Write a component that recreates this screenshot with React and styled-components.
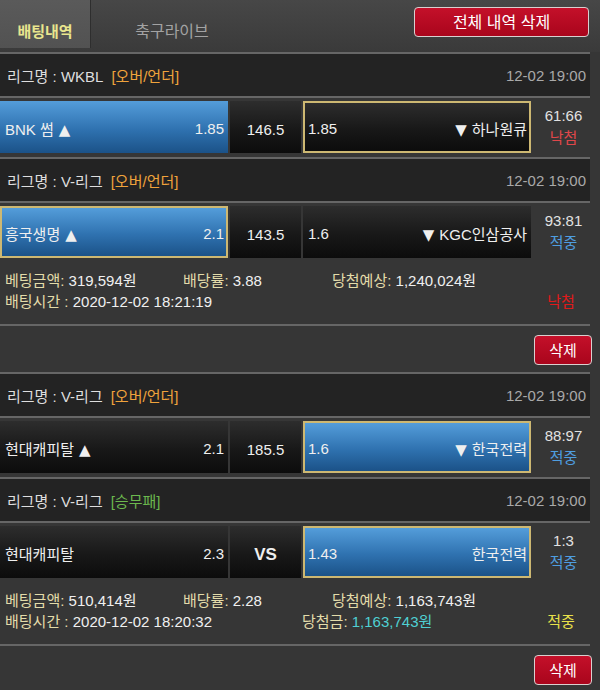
import React from "react";
import styled, { createGlobalStyle, css } from "styled-components";

const GlobalStyle = createGlobalStyle`
  html, body {
    margin: 0;
    background: #363636;
  }
  body {
    font-family: "Liberation Sans", "Noto Sans CJK KR", sans-serif;
    color: #e6e6e6;
  }
`;

const Page = styled.div`
  width: 600px;
  height: 690px;
  overflow: hidden;
  background: #363636;
`;

const TopBar = styled.div`
  height: 52px;
  display: flex;
  align-items: flex-start;
  background: linear-gradient(#474747, #3a3a3a);
  padding-right: 11px;
`;

const Tab = styled.div`
  height: 48px;
  display: flex;
  align-items: center;
  justify-content: center;
  padding-top: 12px;
  box-sizing: border-box;
  font-size: 15px;
  ${(p) =>
    p.active
      ? css`
          width: 91px;
          background: linear-gradient(#5a5a5a, #525252);
          border-right: 1px solid #2e2e2e;
          color: #e9e68e;
          font-weight: bold;
        `
      : css`
          width: 162px;
          font-size: 16px;
          color: #a3a3a3;
        `}
`;

const DeleteAll = styled.button`
  margin-left: auto;
  margin-top: 7px;
  width: 175px;
  height: 30px;
  border: 1px solid #d9cfcf;
  border-radius: 4px;
  background: linear-gradient(#c4102a, #a9051c);
  color: #fff;
  font-family: inherit;
  font-size: 16px;
  padding: 0 0 3px;
`;

const Content = styled.div`
  width: 590px;
`;

const Line = styled.div`
  height: 2px;
  background: #666;
`;

const LeagueHeader = styled.div`
  height: 42px;
  display: flex;
  align-items: center;
  padding: 0 4px 0 7px;
  background: #232323;
  font-size: 15px;
  color: #dedede;
`;

const Tag = styled.span`
  margin-left: 8px;
  color: ${(p) => (p.kind === "승무패" ? "#6cb94e" : "#f0a33c")};
`;

const Time = styled.span`
  margin-left: auto;
  color: #a9a9a9;
`;

const BetRow = styled.div`
  display: flex;
  gap: 2px;
  padding: 3px 0 4px;
  font-size: 15px;
`;

const Cell = styled.div`
  height: 52px;
  box-sizing: border-box;
  display: flex;
  align-items: center;
  justify-content: space-between;
  padding: 2px 4px 0 5px;
  color: #efefef;
  background: ${(p) =>
    p.picked
      ? "linear-gradient(#549dda, #2f72b0 55%, #1b5288)"
      : "linear-gradient(#2d2d2d, #181818 55%, #0c0c0c)"};
  border: ${(p) => (p.outlined ? "2px solid #cdb872" : "none")};
  ${(p) => p.outlined && css`padding: 2px 2px 0 3px;`}
`;

const TeamCell = styled(Cell)`
  width: 228px;
`;

const MidCell = styled(Cell)`
  width: 71px;
  justify-content: center;
  padding: 5px 0 0;
  font-weight: ${(p) => (p.vs ? "bold" : "normal")};
  font-size: ${(p) => (p.vs ? "17px" : "15px")};
`;

const AwayCell = styled(Cell)`
  width: 228px;
`;

const Arrow = styled.span`
  font-family: "DejaVu Sans", sans-serif;
  font-size: 15px;
  margin: 0 5px;
`;

const Score = styled.div`
  flex: 1;
  display: flex;
  flex-direction: column;
  align-items: center;
  justify-content: center;
  line-height: 22px;
  padding-left: 4px;
  color: #e2e2e2;
`;

const Outcome = styled.span`
  color: ${(p) => (p.result === "낙첨" ? "#e0474a" : "#4f9ee0")};
`;

const Info = styled.div`
  padding: 8px 0 12px 5px;
  font-size: 15px;
  line-height: 21px;
`;

const InfoLine = styled.div`
  display: flex;
  align-items: center;
`;

const InfoItem = styled.div`
  width: ${(p) => p.w}px;
  white-space: nowrap;
  color: #f0f0f0;
`;

const Label = styled.span`
  color: #e3dcaa;
`;

const WinAmount = styled.span`
  color: #4fd0d3;
`;

const SlipResult = styled.div`
  margin-left: auto;
  width: 58px;
  text-align: center;
  color: ${(p) => (p.result === "낙첨" ? "#e01a1a" : "#e8e14a")};
`;

const DeleteRow = styled.div`
  height: 46px;
  display: flex;
  justify-content: flex-end;
  align-items: flex-start;
  padding-right: 8px;
  width: 600px;
  box-sizing: border-box;
`;

const DeleteButton = styled.button`
  margin-top: 9px;
  width: 58px;
  height: 30px;
  border: 1px solid #dacfcf;
  border-radius: 4px;
  background: linear-gradient(#c4102a, #a9051c);
  color: #fff;
  font-family: inherit;
  font-size: 15px;
  padding: 0 0 2px;
`;

const slips = [
  {
    games: [
      {
        league: "WKBL",
        type: "오버/언더",
        home: "BNK 썸",
        homeOdds: "1.85",
        mid: "146.5",
        awayOdds: "1.85",
        away: "하나원큐",
        arrows: true,
        pick: "home",
        outline: "away",
        score: "61:66",
        result: "낙첨",
      },
      {
        league: "V-리그",
        type: "오버/언더",
        home: "흥국생명",
        homeOdds: "2.1",
        mid: "143.5",
        awayOdds: "1.6",
        away: "KGC인삼공사",
        arrows: true,
        pick: "home",
        outline: "home",
        score: "93:81",
        result: "적중",
      },
    ],
    amount: "319,594원",
    rate: "3.88",
    expected: "1,240,024원",
    time: "2020-12-02 18:21:19",
    result: "낙첨",
  },
  {
    games: [
      {
        league: "V-리그",
        type: "오버/언더",
        home: "현대캐피탈",
        homeOdds: "2.1",
        mid: "185.5",
        awayOdds: "1.6",
        away: "한국전력",
        arrows: true,
        pick: "away",
        outline: "away",
        score: "88:97",
        result: "적중",
      },
      {
        league: "V-리그",
        type: "승무패",
        home: "현대캐피탈",
        homeOdds: "2.3",
        mid: "VS",
        awayOdds: "1.43",
        away: "한국전력",
        arrows: false,
        pick: "away",
        outline: "away",
        score: "1:3",
        result: "적중",
      },
    ],
    amount: "510,414원",
    rate: "2.28",
    expected: "1,163,743원",
    time: "2020-12-02 18:20:32",
    win: "1,163,743원",
    result: "적중",
  },
];

const Game = ({ g }) => (
  <>
    <Line />
    <LeagueHeader>
      리그명 : {g.league}
      <Tag kind={g.type}>[{g.type}]</Tag>
      <Time>12-02 19:00</Time>
    </LeagueHeader>
    <Line />
    <BetRow>
      <TeamCell picked={g.pick === "home"} outlined={g.outline === "home"}>
        <span>
          {g.home}
          {g.arrows && <Arrow>▲</Arrow>}
        </span>
        <span>{g.homeOdds}</span>
      </TeamCell>
      <MidCell vs={g.mid === "VS"}>{g.mid}</MidCell>
      <AwayCell picked={g.pick === "away"} outlined={g.outline === "away"}>
        <span>{g.awayOdds}</span>
        <span>
          {g.arrows && <Arrow>▼</Arrow>}
          {g.away}
        </span>
      </AwayCell>
      <Score>
        <span>{g.score}</span>
        <Outcome result={g.result}>{g.result}</Outcome>
      </Score>
    </BetRow>
  </>
);

const Slip = ({ s }) => (
  <>
    {s.games.map((g, i) => (
      <Game key={i} g={g} />
    ))}
    <Info>
      <InfoLine>
        <InfoItem w={178}>
          <Label>베팅금액:</Label> {s.amount}
        </InfoItem>
        <InfoItem w={149}>
          <Label>배당률:</Label> {s.rate}
        </InfoItem>
        <InfoItem w={200}>
          <Label>당첨예상:</Label> {s.expected}
        </InfoItem>
      </InfoLine>
      <InfoLine>
        <InfoItem w={297}>
          <Label>배팅시간 :</Label> {s.time}
        </InfoItem>
        {s.win && (
          <InfoItem w={200}>
            <Label>당첨금:</Label> <WinAmount>{s.win}</WinAmount>
          </InfoItem>
        )}
        <SlipResult result={s.result}>{s.result}</SlipResult>
      </InfoLine>
    </Info>
    <Line />
    <DeleteRow>
      <DeleteButton>삭제</DeleteButton>
    </DeleteRow>
  </>
);

export default function App() {
  return (
    <Page>
      <GlobalStyle />
      <TopBar>
        <Tab active>배팅내역</Tab>
        <Tab>축구라이브</Tab>
        <DeleteAll>전체 내역 삭제</DeleteAll>
      </TopBar>
      <Content>
        {slips.map((s, i) => (
          <Slip key={i} s={s} />
        ))}
      </Content>
    </Page>
  );
}
